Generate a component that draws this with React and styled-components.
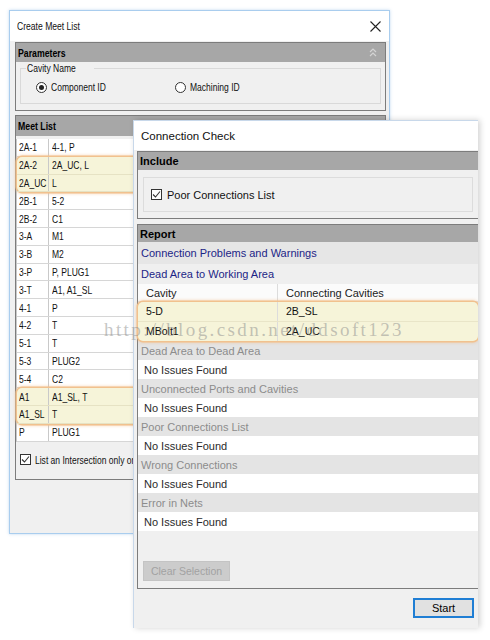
import React from 'react';
import styled, { createGlobalStyle } from 'styled-components';

const Global = createGlobalStyle`
  html, body { margin: 0; padding: 0; background: #fff; }
  body { width: 490px; height: 640px; overflow: hidden; font-family: "Liberation Sans", Arial, sans-serif; }
  * { box-sizing: border-box; }
`;

const Desktop = styled.div`
  position: relative;
  width: 490px;
  height: 640px;
  background: #fff;
  overflow: hidden;
`;

const Window = styled.div`
  position: absolute;
  left: ${p => p.$left}px;
  top: ${p => p.$top}px;
  width: ${p => p.$width}px;
  height: ${p => p.$height}px;
  background: #f0f0f0;
  display: flex;
  flex-direction: column;
  overflow: hidden;
`;

const MeetWindow = styled(Window)`
  border: 1px solid #a9cdee;
  box-shadow: 0 0 3px rgba(120, 170, 225, 0.45);
  font-family: "Liberation Sans", Arial, sans-serif;
  font-size: 11.5px;
  color: #111;
`;

const CheckWindow = styled(Window)`
  border-left: 1px solid #c8d8ea;
  border-top: 1px solid #c8d8ea;
  box-shadow: 2px 0 6px rgba(0, 0, 0, 0.18);
  font-family: "Liberation Sans", Arial, sans-serif;
  font-size: 11px;
  color: #111;
  z-index: 2;
`;

/* the Create Meet List dialog uses a condensed UI face */
const Narrow = styled.span`
  display: inline-block;
  white-space: nowrap;
  transform: scaleX(${p => p.$s || 0.74});
  transform-origin: left center;
`;

const TitleBar = styled.div`
  height: ${p => p.$h}px;
  flex: none;
  background: #fff;
  display: flex;
  align-items: center;
  justify-content: space-between;
  padding: 0 8px 0 7px;
  font-size: ${p => p.$size || 11}px;
  color: #111;
`;

const Body = styled.div`
  flex: 1;
  display: flex;
  flex-direction: column;
  gap: ${p => p.$gap}px;
  padding: ${p => p.$pad};
`;

const Panel = styled.section`
  border: 1px solid #7c7c7c;
  border-right: ${p => (p.$open ? 'none' : '1px solid #7c7c7c')};
  background: #f0f0f0;
  display: flex;
  flex-direction: column;
  height: ${p => (p.$h ? `${p.$h}px` : 'auto')};
  flex: none;
`;

const PanelHeader = styled.div`
  height: ${p => p.$h}px;
  flex: none;
  background: #a7a7a7;
  font-weight: bold;
  display: flex;
  align-items: center;
  justify-content: space-between;
  padding: 0 8px 0 2px;
  color: #000;
`;

const GroupBox = styled.fieldset`
  margin: 0 4px 6px 4px;
  padding: 6px 0 8px 4px;
  border: 1px solid #d9d9d9;
  display: flex;
  align-items: center;
  height: 42px;

  legend {
    padding: 0 1px;
    margin-left: 1px;
    line-height: 12px;
  }
`;

const RadioLabel = styled.label`
  display: flex;
  align-items: center;
  gap: 4px;
  width: ${p => p.$w}px;
  height: 14px;
  margin-left: ${p => p.$ml || 0}px;
`;

const RadioDot = styled.span`
  width: 11px;
  height: 11px;
  flex: none;
  border-radius: 50%;
  border: 1px solid #333;
  background: #fff;
  display: flex;
  align-items: center;
  justify-content: center;

  &::after {
    content: '';
    width: 5px;
    height: 5px;
    border-radius: 50%;
    background: ${p => (p.$on ? '#222' : 'transparent')};
  }
`;

const MeetTable = styled.div`
  margin-top: 3px;
  background: #fff;
  border-left: 1px solid #c9c9c9;
`;

const MeetRow = styled.div`
  display: grid;
  grid-template-columns: 32px 1fr;
  height: 17.8px;
  border-bottom: 1px solid ${p => (p.$hl ? '#e6e2c4' : '#d6d6d6')};
  align-items: center;
`;

const MeetCell = styled.span`
  height: 100%;
  display: flex;
  align-items: center;
  overflow: hidden;
  padding-left: ${p => (p.$first ? 2 : 3)}px;
  border-right: ${p => (p.$first ? '1px solid #c9c9c9' : 'none')};
  white-space: nowrap;
`;

const Highlight = styled.div`
  position: relative;
  z-index: 1;
  background: #f6f4d9;
  border-radius: 5px;
  box-shadow: 0 0 0 1.5px #f1c18e, 0 0 3px 2px rgba(240, 180, 120, 0.45);
`;

const CheckRow = styled.label`
  display: flex;
  align-items: center;
  gap: ${p => p.$gap || 4}px;
  padding-left: ${p => p.$pl}px;
  margin-top: ${p => p.$mt || 0}px;
  white-space: nowrap;
`;

const CheckBox = styled.span`
  width: 11px;
  height: 11px;
  border: 1px solid #333;
  background: #fff;
  display: flex;
  flex: none;
  align-items: center;
  justify-content: center;
`;

const InnerBox = styled.div`
  margin: 7px 5px 6px 5px;
  height: 35px;
  border: 1px solid #dcdcdc;
  display: flex;
  align-items: center;
`;

const Band = styled.div`
  height: ${p => p.$h}px;
  flex: none;
  display: flex;
  align-items: center;
  padding-left: ${p => p.$pl || 3}px;
  background: ${p => p.$bg};
  color: ${p => p.$color};
  white-space: nowrap;
`;

const ReportTableHead = styled.div`
  display: grid;
  grid-template-columns: 140px 1fr;
  height: 18px;
  background: #fbfbfb;
  border-bottom: 1px solid #e2e2e2;
  color: #222;
`;

const ReportRow = styled.div`
  display: grid;
  grid-template-columns: 140px 1fr;
  height: 19.5px;
  border-bottom: ${p => (p.$last ? 'none' : '1px solid #e9e5c8')};
  color: #111;
  font-size: 10.5px;
`;

const RCell = styled.span`
  display: flex;
  align-items: center;
  padding-left: 8px;
  border-right: ${p => (p.$first ? '1px solid #dcdcdc' : 'none')};
  white-space: nowrap;
`;

const Spacer = styled.div`
  flex: 1;
`;

const ClearButton = styled.button`
  margin: 0 0 7px 5px;
  width: 87px;
  height: 20px;
  border: 1px solid #c4c4c4;
  background: #cccccc;
  color: #a2a2a2;
  font: inherit;
  font-size: 10.5px;
  padding: 0;
`;

const StartRow = styled.div`
  display: flex;
  justify-content: flex-end;
  padding: 4px 4px 0 0;
`;

const StartButton = styled.button`
  width: 61px;
  height: 20px;
  border: 2px solid #1f7ed4;
  background: #e1e1e1;
  font: inherit;
  font-size: 11px;
  color: #000;
  padding: 0;
`;

const Watermark = styled.div`
  position: absolute;
  left: 104px;
  top: 320px;
  z-index: 5;
  font-family: "Liberation Serif", "DejaVu Serif", serif;
  font-size: 19px;
  line-height: 19px;
  letter-spacing: 2.4px;
  color: rgba(140, 140, 140, 0.5);
  pointer-events: none;
  white-space: nowrap;
`;

const CloseIcon = () => (
  <svg width="11" height="11" viewBox="0 0 11 11">
    <path d="M0.5 0.5 L10.5 10.5 M10.5 0.5 L0.5 10.5" stroke="#222" strokeWidth="1.1" fill="none" />
  </svg>
);

const CollapseIcon = () => (
  <svg width="8" height="9" viewBox="0 0 8 9">
    <path d="M1 4 L4 1 L7 4 M1 8 L4 5 L7 8" stroke="#d4d4d4" strokeWidth="1.2" fill="none" />
  </svg>
);

const Tick = () => (
  <svg width="9" height="9" viewBox="0 0 9 9">
    <path d="M1 4.5 L3.5 7 L8 1.5" stroke="#333" strokeWidth="1.1" fill="none" />
  </svg>
);

const meet = [
  ['2A-1', '4-1, P'],
  ['2A-2', '2A_UC, L', 1],
  ['2A_UC', 'L', 1],
  ['2B-1', '5-2'],
  ['2B-2', 'C1'],
  ['3-A', 'M1'],
  ['3-B', 'M2'],
  ['3-P', 'P, PLUG1'],
  ['3-T', 'A1, A1_SL'],
  ['4-1', 'P'],
  ['4-2', 'T'],
  ['5-1', 'T'],
  ['5-3', 'PLUG2'],
  ['5-4', 'C2'],
  ['A1', 'A1_SL, T', 2],
  ['A1_SL', 'T', 2],
  ['P', 'PLUG1'],
];

const sections = [
  'Dead Area to Dead Area',
  'Unconnected Ports and Cavities',
  'Poor Connections List',
  'Wrong Connections',
  'Error in Nets',
];

const MeetLine = ({ row, hl }) => (
  <MeetRow $hl={hl}>
    <MeetCell $first><Narrow>{row[0]}</Narrow></MeetCell>
    <MeetCell><Narrow>{row[1]}</Narrow></MeetCell>
  </MeetRow>
);

function renderMeet() {
  const out = [];
  let i = 0;
  while (i < meet.length) {
    const g = meet[i][2];
    if (g) {
      const grp = meet.filter(r => r[2] === g);
      out.push(
        <Highlight key={`g${g}`}>
          {grp.map(r => <MeetLine key={r[0]} row={r} hl />)}
        </Highlight>
      );
      i += grp.length;
    } else {
      out.push(<MeetLine key={meet[i][0]} row={meet[i]} />);
      i += 1;
    }
  }
  return out;
}

export default function App() {
  return (
    <Desktop>
      <Global />
      <MeetWindow $left={9} $top={10} $width={381} $height={524}>
        <TitleBar $h={30}>
          <Narrow $s={0.78}>Create Meet List</Narrow>
          <CloseIcon />
        </TitleBar>
        <Body $gap={4} $pad="1px 3px 0 5px">
          <Panel>
            <PanelHeader $h={19}>
              <Narrow $s={0.76}>Parameters</Narrow>
              <CollapseIcon />
            </PanelHeader>
            <GroupBox>
              <legend><Narrow>Cavity Name</Narrow></legend>
              <RadioLabel $w={139} $ml={11}>
                <RadioDot $on />
                <Narrow>Component ID</Narrow>
              </RadioLabel>
              <RadioLabel $w={120}>
                <RadioDot />
                <Narrow>Machining ID</Narrow>
              </RadioLabel>
            </GroupBox>
          </Panel>
          <Panel $h={365}>
            <PanelHeader $h={20}>
              <Narrow $s={0.76}>Meet List</Narrow>
            </PanelHeader>
            <MeetTable>{renderMeet()}</MeetTable>
            <CheckRow $pl={4} $mt={12}>
              <CheckBox>
                <Tick />
              </CheckBox>
              <Narrow>List an Intersection only once</Narrow>
            </CheckRow>
          </Panel>
        </Body>
      </MeetWindow>

      <CheckWindow $left={133} $top={120} $width={345} $height={508}>
        <TitleBar $h={29} $size={11.5}>
          <span>Connection Check</span>
        </TitleBar>
        <Body $gap={5} $pad="1px 0 0 3px">
          <Panel $open>
            <PanelHeader $h={18}>
              <span>Include</span>
            </PanelHeader>
            <InnerBox>
              <CheckRow $pl={7} $gap={5}>
                <CheckBox>
                  <Tick />
                </CheckBox>
                Poor Connections List
              </CheckRow>
            </InnerBox>
          </Panel>
          <Panel $open $h={365}>
            <PanelHeader $h={17}>
              <span>Report</span>
            </PanelHeader>
            <Band $h={22} $bg="#e6e6e6" $color="#1c2586">Connection Problems and Warnings</Band>
            <Band $h={20} $bg="#efefef" $color="#1c2586">Dead Area to Working Area</Band>
            <ReportTableHead>
              <RCell $first>Cavity</RCell>
              <RCell>Connecting Cavities</RCell>
            </ReportTableHead>
            <Highlight>
              <ReportRow>
                <RCell $first>5-D</RCell>
                <RCell>2B_SL</RCell>
              </ReportRow>
              <ReportRow $last>
                <RCell $first>MBolt1</RCell>
                <RCell>2A_UC</RCell>
              </ReportRow>
            </Highlight>
            {sections.map(s => (
              <React.Fragment key={s}>
                <Band $h={19} $bg="#e4e4e4" $color="#8c8c8c">{s}</Band>
                <Band $h={19} $bg="#ffffff" $color="#2a2a2a" $pl={6}>No Issues Found</Band>
              </React.Fragment>
            ))}
            <Spacer />
            <div>
              <ClearButton disabled>Clear Selection</ClearButton>
            </div>
          </Panel>
          <StartRow>
            <StartButton>Start</StartButton>
          </StartRow>
        </Body>
      </CheckWindow>

      <Watermark>http://blog.csdn.net/ddsoft123</Watermark>
    </Desktop>
  );
}
